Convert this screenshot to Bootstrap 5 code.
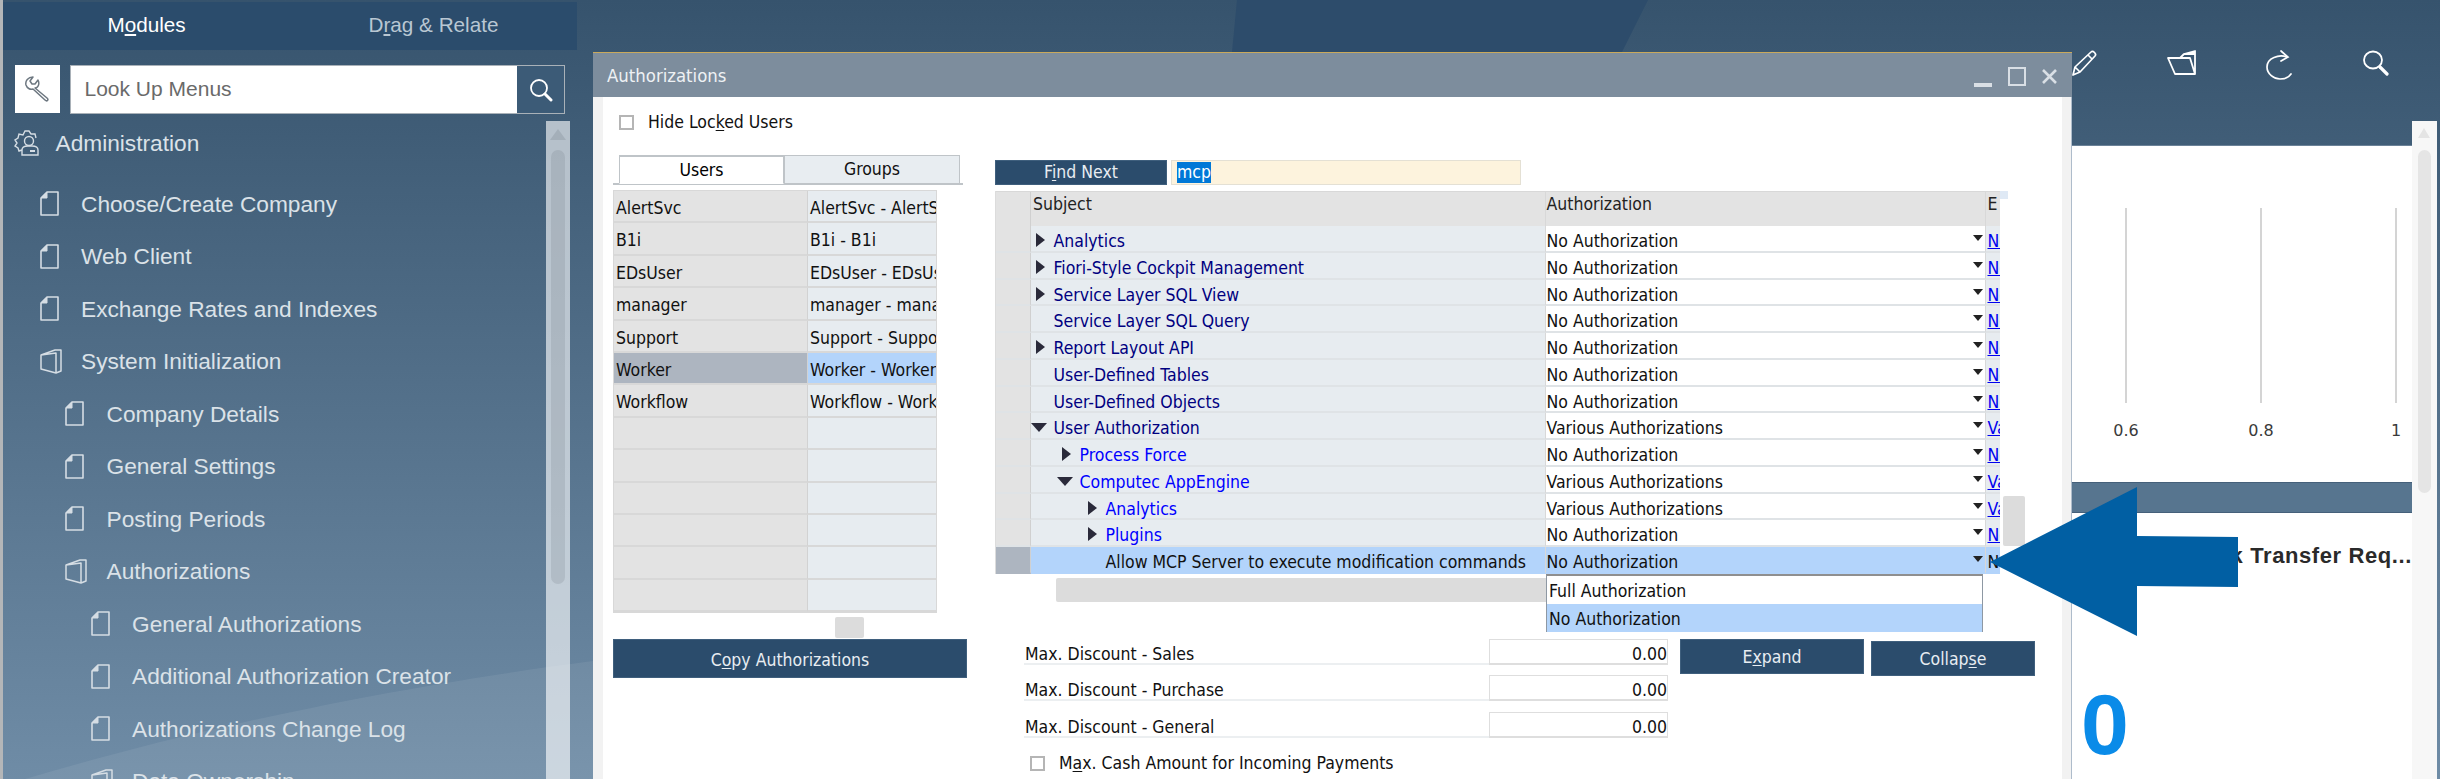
<!DOCTYPE html>
<html lang="en">
<head>
  <meta charset="UTF-8" />
  <title>Authorizations</title>
  <link href="https://cdn.jsdelivr.net/npm/bootstrap@5.3.2/dist/css/bootstrap.min.css" rel="stylesheet" />
  <style>
    html, body { height: 779px; overflow: hidden; }
    body {
      position: relative;
      width: 2440px;
      background: linear-gradient(180deg, #36536d 0%, #6f8ca6 100%);
      font-family: "Liberation Sans", Arial, sans-serif;
    }
    u { text-underline-offset: 2px; }

    /* wave behind the sidebar */
    .bg-wave { position: absolute; left: 0; top: 0; }

    /* sidebar */
    .side-pane { position: relative; width: 577px; height: 779px; flex: none; border-left: 3px solid #b4b6b8; padding-top: 2px; }
    .mod-tabs { height: 48px; background: #2b4c6c; font-size: 20.7px; }
    .mod-tabs > div { width: 50%; text-align: center; line-height: 46px; color: #b9c7d3; }
    .mod-tabs > div.on { color: #fff; }
    .lookup { margin: 15px 12px 0 11.5px; height: 49px; }
    .tool-box { width: 45px; height: 48px; background: #fff; flex: none; }
    .lookup-input { width: 496px; margin-left: 10px; border: 1px solid #a9b1b8; background: #fff; }
    .lookup-input .hint { flex: 1; padding-left: 14px; color: #6a6a6a; font-size: 21px; line-height: 46px; }
    .lookup-input .go { width: 47px; background: #3c5b77; }
    .menu-tree { margin-top: 3px; color: #dbe2e8; font-size: 22.7px; white-space: nowrap; }
    .menu-row { height: 52.5px; }
    .menu-row svg { flex: none; }
    .menu-row.top { padding-left: 11px; margin-bottom: 8.2px; }
    .lv1 { padding-left: 36.5px; }
    .lv2 { padding-left: 62px; }
    .lv3 { padding-left: 87.5px; }
    .menu-row .ico { width: 41.5px; }
    .side-scroll { position: absolute; left: 543px; top: 121px; width: 24px; height: 658px; background: rgba(255,255,255,.62); }
    .side-scroll .up { position: absolute; left: 4px; top: 8px; width: 0; height: 0; border: 8px solid transparent; border-top: 0; border-bottom: 11px solid rgba(120,130,140,.28); }
    .side-scroll .thumb { position: absolute; left: 5px; top: 29px; width: 14px; height: 434px; border-radius: 7px; background: rgba(110,120,130,.2); }

    /* main area behind the window */
    .main-pane { flex: 1; height: 779px; position: relative; padding-right: 3px; }
    .top-icons { height: 145px; padding: 50px 13px 0 0; }
    .top-icons > div { width: 97px; text-align: center; }
    .main-body { height: 634px; background: #fff; margin: 0 25px 0 1480px; border-top: 1px solid #6b8298; }
    .chart-card { height: 336px; padding: 62px 1px 0 0; }
    .tick-col { width: 30px; }
    .tick-col + .tick-col { margin-left: 105px; }
    .tick-line { width: 2px; height: 195px; background: #d4d4d4; }
    .tick-txt { margin-top: 17px; font-family: "DejaVu Sans", sans-serif; font-size: 16px; color: #3a3a3a; line-height: 22px; }
    .band { height: 31px; background: #57758f; border-top: 1px solid #45607a; border-bottom: 1px solid #45607a; }
    .tile-box { width: 337px; }
    .tile-title { margin-top: 31px; text-align: right; font-weight: 700; font-size: 22px; letter-spacing: .6px; color: #2a2a2a; line-height: 24px; white-space: nowrap; overflow: hidden; }
    .tile-num { margin: 113px 0 0 6px; font-weight: 700; font-size: 86px; line-height: 86px; color: #0a8be8; }
    .main-scroll { position: absolute; right: 3px; top: 121px; width: 25px; bottom: 0; background: #f7f7f7; }
    .main-scroll .up { position: absolute; left: 6px; top: 7px; width: 0; height: 0; border: 6.5px solid transparent; border-top: 0; border-bottom: 10px solid #e4e4e4; }
    .main-scroll .thumb { position: absolute; left: 6px; top: 29px; width: 13px; height: 343px; border-radius: 7px; background: #e5e5e5; }

    /* the dialog */
    .sb-window {
      position: absolute; left: 593px; top: 52px; width: 1479px; height: 727px;
      background: #fff; border-top: 1px solid #c9a95c;
      font-family: "DejaVu Sans Condensed", "DejaVu Sans", sans-serif; font-stretch: condensed;
      font-size: 17.5px; color: #111;
    }
    .sb-title { height: 44px; background: #7d8d9d; color: #eef1f4; font-size: 18.4px; padding-left: 14px; line-height: 45px; }
    .win-btns { gap: 16px; padding-right: 15px; padding-top: 3px; }
    .win-strip { width: 10px; flex: none; background: #f2f2f2; }
    .win-strip.end { width: 10px; border-right: 1px solid #aebccb; }
    .win-body { height: 682px; }
    .left-col { width: 354px; margin-left: 10px; flex: none; }
    .chk-row { height: 30px; margin-top: 10px; padding-left: 6px; gap: 14px; }
    .sap-chk { width: 15px; height: 15px; border: 2px solid #b5b5b5; background: #fff; flex: none; }
    .user-tabs { margin-top: 18px; height: 30px; width: 350px; padding-left: 6px; border-bottom: 2px solid #bfc4c8; }
    .user-tabs .nav-link { height: 29px; padding: 0; border-radius: 0; line-height: 27px; text-align: center; color: #111; border: 1px solid #bfc4c8; }
    .user-tabs .tab-a { width: 165px; }
    .user-tabs .tab-b { width: 176px; background: #e8edf1; }
    .user-tabs .nav-link.active { border-color: #bfc4c8 #bfc4c8 #fff; background: #fff; border-top-width: 2px; }
    .user-grid { margin-top: 5px; width: 324px; border: 1px solid #d8d8d8; }
    .user-row { height: 32.4px; line-height: 35px; }
    .user-row > div { border-bottom: 2px solid #d8d8d8; overflow: hidden; white-space: nowrap; padding-left: 2px; }
    .user-row .c1 { width: 194px; background: #e3e3e3; border-right: 1px solid #d2d2d2; }
    .user-row .c2 { flex: 1; background: #e7ecf0; padding-left: 2px; }
    .user-row.sel .c1 { background: #adb5c0; }
    .user-row.sel .c2 { background: #b3d4fb; }
    .thumb-h { margin: 4px 0 0 222px; width: 29px; height: 21px; background: #dcdcdc; border-radius: 2px; }
    .sap-btn { background: #2b4c6c; color: #e8edf2; border: 1px solid #3f5f7d; border-radius: 0; padding: 0; font-size: 17.5px; }
    .sap-btn:hover { background: #2b4c6c; color: #e8edf2; border-color: #3f5f7d; }
    .copy-btn { width: 354px; height: 39px; margin-top: 1px; padding-top: 3px; }

    .right-col { flex: 1; margin-left: 28px; position: relative; }
    .find-row { margin-top: 63px; height: 25px; gap: 4px; }
    .find-btn { width: 172px; height: 25px; line-height: 23px; }
    .find-input { width: 350px; height: 25px; background: #fdf3dd; border: 1px solid #e4e0d4; padding-left: 5px; line-height: 23px; }
    .find-input span { background: #0078d7; color: #fff; display: inline-block; line-height: 21px; }
    .auth-grid { margin-top: 6px; width: 1005px; border-left: 1px solid #dcdcdc; position: relative; }
    .auth-head { height: 35px; background: #e3e3e3; border-top: 1px solid #d8d8d8; line-height: 25px; color: #222; }
    .auth-head > div, .auth-row > div { flex: none; }
    .col-rh { width: 35px; border-right: 1px solid #d0d0d0; }
    .col-su { width: 514.5px; padding-left: 2px; border-right: 1px solid #d8d8d8; }
    .col-au { width: 439px; padding-left: 1px; }
    .col-ex { width: 15.5px; overflow: hidden; white-space: nowrap; padding-left: 2px; border-left: 1px solid #d8d8d8; }
    .auth-row { height: 26.77px; line-height: 31px; padding-top: 0; }
    .auth-row > div { height: 100%; border-bottom: 2px solid #dfe3e6; }
    .auth-row .col-rh { background: #e3e3e3; }
    .auth-row .col-su { background: #e7ecf0; padding-left: 0; white-space: nowrap; color: #000080; }
    .auth-row .col-au { background: #fff; position: relative; }
    .auth-row .col-ex { background: #e7ecf0; }
    .auth-row .col-ex a { color: #0000ee; }
    .auth-row.nest .col-su { color: #0000ff; }
    .auth-row.sel > div { background: #b3d4fb; border-bottom-color: #b3d4fb; }
    .auth-row.sel .col-rh { background: #adb5c0; border-bottom-color: #adb5c0; }
    .auth-row.sel .col-su { color: #111; }
    .tree-slot { display: inline-block; width: 22.5px; height: 100%; position: relative; vertical-align: top; }
    .tri-r { position: absolute; left: 5px; top: 7px; width: 0; height: 0; border-top: 7.5px solid transparent; border-bottom: 7.5px solid transparent; border-left: 9px solid #2a2a3a; }
    .tri-d { position: absolute; left: 0; top: 10px; width: 0; height: 0; border-left: 8px solid transparent; border-right: 8px solid transparent; border-top: 9px solid #2a2a3a; }
    .auth-row .col-su.t1 { padding-left: 26px; }
    .auth-row .col-su.t2 { padding-left: 52px; }
    .auth-row .col-su.t2x { padding-left: 74.5px; }
    .drop-tri { position: absolute; right: 2px; top: 9px; width: 0; height: 0; border-left: 5.5px solid transparent; border-right: 5.5px solid transparent; border-top: 6px solid #222; }
    .corner-mark { position: absolute; left: 1004px; top: 0; width: 8px; height: 8px; background: #dfe9f5; }
    .v-thumb { position: absolute; left: 1007px; top: 305px; width: 22px; height: 50px; background: #dcdcdc; border-radius: 2px; z-index: 1; }
    .h-thumb { margin: 4px 0 0 61px; width: 500px; height: 24px; background: #dcdcdc; border-radius: 2px; }
    .drop-menu { position: absolute; left: 953px; top: 521px; width: 437px; height: 58px; z-index: 3; background: #fff; border: 1px solid #8e98a3; border-top: 2px solid #8f8f8f; }
    .drop-menu > div { height: 28px; line-height: 30px; padding-left: 2px; }
    .drop-menu .pick { background: #b3d4fb; }
    .form-part { margin: 37px 0 0 29px; }
    .limit-col { width: 644px; flex: none; }
    .limit-row { height: 26px; margin-bottom: 10.5px; border-bottom: 2px solid #eceff1; line-height: 31px; padding-left: 1px; }
    .limit-row .val { width: 179px; height: 26px; margin-left: auto; border: 1px solid #dedede; border-bottom-width: 2px; text-align: right; line-height: 29px; }
    .exp-btn { width: 184px; height: 35px; margin-left: 12px; padding-top: 2px; }
    .col-btn { width: 164px; height: 35px; margin: 2px 0 0 7px; padding-top: 2px; }
    .cash-row { margin: 15px 0 0 6px; gap: 14px; line-height: 21px; }

    .call-out { position: absolute; left: 0; top: 0; z-index: 5; pointer-events: none; }
  </style>
</head>
<body>
  <svg class="bg-wave" width="2440" height="779">
    <path d="M25 779 C140 745 330 695 600 660 L600 779 Z" fill="#fff" fill-opacity=".07"/>
    <path d="M1237 0H1648L1622 52H1232Z" fill="#2d4c6b"/>
  </svg>

  <svg width="0" height="0" class="position-absolute">
    <defs>
      <symbol id="ic-page" viewBox="0 0 19 25"><path d="M7 1H18V24H1V7Z" fill="none" stroke="#d5dde4" stroke-width="1.6" stroke-linejoin="round"/><path d="M7 1V7H1Z" fill="#d5dde4" stroke="#d5dde4"/></symbol>
      <symbol id="ic-book" viewBox="0 0 22 25"><path d="M1 6L16 4V24L1 20Z M1 6L15 1H21V22L16 24" fill="none" stroke="#d5dde4" stroke-width="1.5" stroke-linejoin="round"/></symbol>
    </defs>
  </svg>

  <div class="d-flex position-relative">
    <aside class="side-pane">
      <div class="mod-tabs d-flex">
        <div class="on">M<u>o</u>dules</div>
        <div>D<u>r</u>ag &amp; Relate</div>
      </div>
      <div class="lookup d-flex">
        <div class="tool-box d-flex align-items-center justify-content-center">
          <svg width="26" height="26" viewBox="0 0 26 26" fill="none" stroke="#6d7780" stroke-width="1.5" stroke-linejoin="round"><path d="M2 9C1 5 4 1 9 1L6 5 8 8 11 8 14 4C16 8 14 12 11 12L23 22C25 24 23 26 21 24L9 13C6 14 3 12 2 9Z"/></svg>
        </div>
        <div class="lookup-input d-flex">
          <div class="hint">Look Up Menus</div>
          <div class="go d-flex align-items-center justify-content-center">
            <svg width="24" height="24" viewBox="0 0 24 24" fill="none" stroke="#fff"><circle cx="10" cy="10" r="8" stroke-width="1.8"/><path d="M16 16L22 22" stroke-width="3" stroke-linecap="round"/></svg>
          </div>
        </div>
      </div>
      <div class="menu-tree">
        <div class="menu-row top d-flex align-items-center">
          <div class="ico">
            <svg class="d-block" width="26" height="26" viewBox="0 0 26 26" fill="none" stroke="#d5dde4" stroke-width="1.4"><path d="M8 20L5 21 4 18 1 16 3 13 1 10 4 8 5 4 9 5 11 1 15 1 17 4 21 4 22 8"/><circle cx="15" cy="11" r="4.5"/><path d="M8 25V20C8 17 11 16 14 16H18C21 16 24 17 24 20V25Z"/><path d="M16 21H21" stroke-width="2"/></svg>
          </div>
          <span>Administration</span>
        </div>
        <div class="menu-row lv1 d-flex align-items-center"><div class="ico"><svg class="d-block" width="19" height="25"><use href="#ic-page"/></svg></div><span>Choose/Create Company</span></div>
        <div class="menu-row lv1 d-flex align-items-center"><div class="ico"><svg class="d-block" width="19" height="25"><use href="#ic-page"/></svg></div><span>Web Client</span></div>
        <div class="menu-row lv1 d-flex align-items-center"><div class="ico"><svg class="d-block" width="19" height="25"><use href="#ic-page"/></svg></div><span>Exchange Rates and Indexes</span></div>
        <div class="menu-row lv1 d-flex align-items-center"><div class="ico"><svg class="d-block" width="22" height="25"><use href="#ic-book"/></svg></div><span>System Initialization</span></div>
        <div class="menu-row lv2 d-flex align-items-center"><div class="ico"><svg class="d-block" width="19" height="25"><use href="#ic-page"/></svg></div><span>Company Details</span></div>
        <div class="menu-row lv2 d-flex align-items-center"><div class="ico"><svg class="d-block" width="19" height="25"><use href="#ic-page"/></svg></div><span>General Settings</span></div>
        <div class="menu-row lv2 d-flex align-items-center"><div class="ico"><svg class="d-block" width="19" height="25"><use href="#ic-page"/></svg></div><span>Posting Periods</span></div>
        <div class="menu-row lv2 d-flex align-items-center"><div class="ico"><svg class="d-block" width="22" height="25"><use href="#ic-book"/></svg></div><span>Authorizations</span></div>
        <div class="menu-row lv3 d-flex align-items-center"><div class="ico"><svg class="d-block" width="19" height="25"><use href="#ic-page"/></svg></div><span>General Authorizations</span></div>
        <div class="menu-row lv3 d-flex align-items-center"><div class="ico"><svg class="d-block" width="19" height="25"><use href="#ic-page"/></svg></div><span>Additional Authorization Creator</span></div>
        <div class="menu-row lv3 d-flex align-items-center"><div class="ico"><svg class="d-block" width="19" height="25"><use href="#ic-page"/></svg></div><span>Authorizations Change Log</span></div>
        <div class="menu-row lv3 d-flex align-items-center"><div class="ico"><svg class="d-block" width="22" height="25"><use href="#ic-book"/></svg></div><span>Data Ownership</span></div>
      </div>
      <div class="side-scroll"><div class="up"></div><div class="thumb"></div></div>
    </aside>

    <main class="main-pane">
      <div class="top-icons d-flex justify-content-end">
        <div>
          <svg width="26" height="26" viewBox="0 0 26 26" fill="none" stroke="#fff" stroke-width="1.7" stroke-linejoin="round"><path d="M1 25L3 17 19 2C21 0 25 4 23 6L8 22ZM3 17L8 22M16 5L20 9"/></svg>
        </div>
        <div>
          <svg width="30" height="26" viewBox="0 0 30 26" fill="none" stroke="#fff" stroke-width="1.8" stroke-linejoin="round"><path d="M1 8H13L17 4 28 1V24H8ZM13 8L17 4M17 4H28M28 24L23 8H13"/></svg>
        </div>
        <div>
          <svg width="28" height="30" viewBox="0 0 28 30" fill="none" stroke="#fff" stroke-width="1.7" stroke-linecap="round"><path d="M22 7C14 4 2 8 2 17 2 24 9 29 15 29 20 29 24 27 26 24"/><path d="M16 1L23 7 16 11"/></svg>
        </div>
        <div>
          <svg width="27" height="26" viewBox="0 0 27 26" fill="none" stroke="#fff"><ellipse cx="11" cy="10" rx="9" ry="8.5" stroke-width="1.8"/><path d="M18 17L25 24" stroke-width="3.2" stroke-linecap="round"/></svg>
        </div>
      </div>
      <div class="main-body">
        <div class="chart-card d-flex justify-content-end">
          <div class="tick-col d-flex flex-column align-items-center"><div class="tick-line"></div><div class="tick-txt">0.6</div></div>
          <div class="tick-col d-flex flex-column align-items-center"><div class="tick-line"></div><div class="tick-txt">0.8</div></div>
          <div class="tick-col d-flex flex-column align-items-center"><div class="tick-line"></div><div class="tick-txt">1</div></div>
        </div>
        <div class="band"></div>
        <div class="d-flex justify-content-end">
          <div class="tile-box">
            <div class="tile-title">Open Stock Transfer Req...</div>
            <div class="tile-num">0</div>
          </div>
        </div>
      </div>
      <div class="main-scroll"><div class="up"></div><div class="thumb"></div></div>
    </main>
  </div>

  <section class="sb-window">
    <div class="sb-title d-flex justify-content-between">
      <span>Authorizations</span>
      <div class="win-btns d-flex align-items-center">
        <svg width="18" height="22" viewBox="0 0 18 22"><rect x="0" y="17" width="18" height="4" fill="#d9dfe5"/></svg>
        <svg width="18" height="20" viewBox="0 0 18 20" fill="none"><rect x="1" y="1" width="16" height="17" stroke="#d9dfe5" stroke-width="2"/></svg>
        <svg width="15" height="15" viewBox="0 0 15 15" fill="none" stroke="#d9dfe5" stroke-width="2.6"><path d="M1 1L14 14M14 1L1 14"/></svg>
      </div>
    </div>
    <div class="win-body d-flex">
      <div class="win-strip"></div>
      <div class="left-col">
        <div class="chk-row d-flex align-items-center"><div class="sap-chk"></div><span>Hide Loc<u>k</u>ed Users</span></div>
        <ul class="nav nav-tabs user-tabs">
          <li class="nav-item"><a class="nav-link active tab-a" href="#">Users</a></li>
          <li class="nav-item"><a class="nav-link tab-b" href="#">Groups</a></li>
        </ul>
        <div class="user-grid">
          <div class="user-row d-flex"><div class="c1">AlertSvc</div><div class="c2">AlertSvc - AlertSvc</div></div>
          <div class="user-row d-flex"><div class="c1">B1i</div><div class="c2">B1i - B1i</div></div>
          <div class="user-row d-flex"><div class="c1">EDsUser</div><div class="c2">EDsUser - EDsUser</div></div>
          <div class="user-row d-flex"><div class="c1">manager</div><div class="c2">manager - manager</div></div>
          <div class="user-row d-flex"><div class="c1">Support</div><div class="c2">Support - Support</div></div>
          <div class="user-row sel d-flex"><div class="c1">Worker</div><div class="c2">Worker - Worker</div></div>
          <div class="user-row d-flex"><div class="c1">Workflow</div><div class="c2">Workflow - Workflow</div></div>
          <div class="user-row d-flex"><div class="c1"></div><div class="c2"></div></div>
          <div class="user-row d-flex"><div class="c1"></div><div class="c2"></div></div>
          <div class="user-row d-flex"><div class="c1"></div><div class="c2"></div></div>
          <div class="user-row d-flex"><div class="c1"></div><div class="c2"></div></div>
          <div class="user-row d-flex"><div class="c1"></div><div class="c2"></div></div>
          <div class="user-row d-flex"><div class="c1"></div><div class="c2"></div></div>
        </div>
        <div class="thumb-h"></div>
        <button type="button" class="btn sap-btn copy-btn d-block">C<u>o</u>py Authorizations</button>
      </div>

      <div class="right-col">
        <div class="find-row d-flex">
          <button type="button" class="btn sap-btn find-btn">F<u>i</u>nd Next</button>
          <div class="find-input"><span>mcp</span></div>
        </div>
        <div class="auth-grid">
          <div class="auth-head d-flex">
            <div class="col-rh"></div>
            <div class="col-su">Subject</div>
            <div class="col-au">Authorization</div>
            <div class="col-ex">E</div>
          </div>
          <div class="corner-mark"></div>
          <div class="auth-row d-flex"><div class="col-rh"></div><div class="col-su"><span class="tree-slot"><i class="tri-r"></i></span>Analytics</div><div class="col-au">No Authorization<i class="drop-tri"></i></div><div class="col-ex"><a href="#">No Authorization</a></div></div>
          <div class="auth-row d-flex"><div class="col-rh"></div><div class="col-su"><span class="tree-slot"><i class="tri-r"></i></span>Fiori-Style Cockpit Management</div><div class="col-au">No Authorization<i class="drop-tri"></i></div><div class="col-ex"><a href="#">No Authorization</a></div></div>
          <div class="auth-row d-flex"><div class="col-rh"></div><div class="col-su"><span class="tree-slot"><i class="tri-r"></i></span>Service Layer SQL View</div><div class="col-au">No Authorization<i class="drop-tri"></i></div><div class="col-ex"><a href="#">No Authorization</a></div></div>
          <div class="auth-row d-flex"><div class="col-rh"></div><div class="col-su"><span class="tree-slot"></span>Service Layer SQL Query</div><div class="col-au">No Authorization<i class="drop-tri"></i></div><div class="col-ex"><a href="#">No Authorization</a></div></div>
          <div class="auth-row d-flex"><div class="col-rh"></div><div class="col-su"><span class="tree-slot"><i class="tri-r"></i></span>Report Layout API</div><div class="col-au">No Authorization<i class="drop-tri"></i></div><div class="col-ex"><a href="#">No Authorization</a></div></div>
          <div class="auth-row d-flex"><div class="col-rh"></div><div class="col-su"><span class="tree-slot"></span>User-Defined Tables</div><div class="col-au">No Authorization<i class="drop-tri"></i></div><div class="col-ex"><a href="#">No Authorization</a></div></div>
          <div class="auth-row d-flex"><div class="col-rh"></div><div class="col-su"><span class="tree-slot"></span>User-Defined Objects</div><div class="col-au">No Authorization<i class="drop-tri"></i></div><div class="col-ex"><a href="#">No Authorization</a></div></div>
          <div class="auth-row d-flex"><div class="col-rh"></div><div class="col-su"><span class="tree-slot"><i class="tri-d"></i></span>User Authorization</div><div class="col-au">Various Authorizations<i class="drop-tri"></i></div><div class="col-ex"><a href="#">Various Authorizations</a></div></div>
          <div class="auth-row nest d-flex"><div class="col-rh"></div><div class="col-su t1"><span class="tree-slot"><i class="tri-r"></i></span>Process Force</div><div class="col-au">No Authorization<i class="drop-tri"></i></div><div class="col-ex"><a href="#">No Authorization</a></div></div>
          <div class="auth-row nest d-flex"><div class="col-rh"></div><div class="col-su t1"><span class="tree-slot"><i class="tri-d"></i></span>Computec AppEngine</div><div class="col-au">Various Authorizations<i class="drop-tri"></i></div><div class="col-ex"><a href="#">Various Authorizations</a></div></div>
          <div class="auth-row nest d-flex"><div class="col-rh"></div><div class="col-su t2"><span class="tree-slot"><i class="tri-r"></i></span>Analytics</div><div class="col-au">Various Authorizations<i class="drop-tri"></i></div><div class="col-ex"><a href="#">Various Authorizations</a></div></div>
          <div class="auth-row nest d-flex"><div class="col-rh"></div><div class="col-su t2"><span class="tree-slot"><i class="tri-r"></i></span>Plugins</div><div class="col-au">No Authorization<i class="drop-tri"></i></div><div class="col-ex"><a href="#">No Authorization</a></div></div>
          <div class="auth-row sel d-flex"><div class="col-rh"></div><div class="col-su t2x">Allow MCP Server to execute modification commands</div><div class="col-au">No Authorization<i class="drop-tri"></i></div><div class="col-ex">No Authorization</div></div>
          <div class="v-thumb"></div>
        </div>
        <div class="h-thumb"></div>
        <div class="form-part d-flex">
          <div class="limit-col">
            <div class="limit-row d-flex"><span>Max. Discount - Sales</span><div class="val">0.00</div></div>
            <div class="limit-row d-flex"><span>Max. Discount - Purchase</span><div class="val">0.00</div></div>
            <div class="limit-row d-flex"><span>Max. Discount - General</span><div class="val">0.00</div></div>
            <div class="cash-row d-flex align-items-center"><div class="sap-chk"></div><span>M<u>a</u>x. Cash Amount for Incoming Payments</span></div>
          </div>
          <div><button type="button" class="btn sap-btn exp-btn">E<u>x</u>pand</button></div>
          <div><button type="button" class="btn sap-btn col-btn">Collap<u>s</u>e</button></div>
        </div>
      </div>
      <div class="win-strip end"></div>
    </div>
    <div class="drop-menu">
      <div>Full Authorization</div>
      <div class="pick">No Authorization</div>
    </div>
  </section>

  <svg class="call-out" width="2440" height="779"><path d="M1990 562L2137 487V536L2238 537V587L2137 586V636Z" fill="#015fa3"/></svg>

  <script src="https://cdn.jsdelivr.net/npm/bootstrap@5.3.2/dist/js/bootstrap.bundle.min.js"></script>
</body>
</html>
